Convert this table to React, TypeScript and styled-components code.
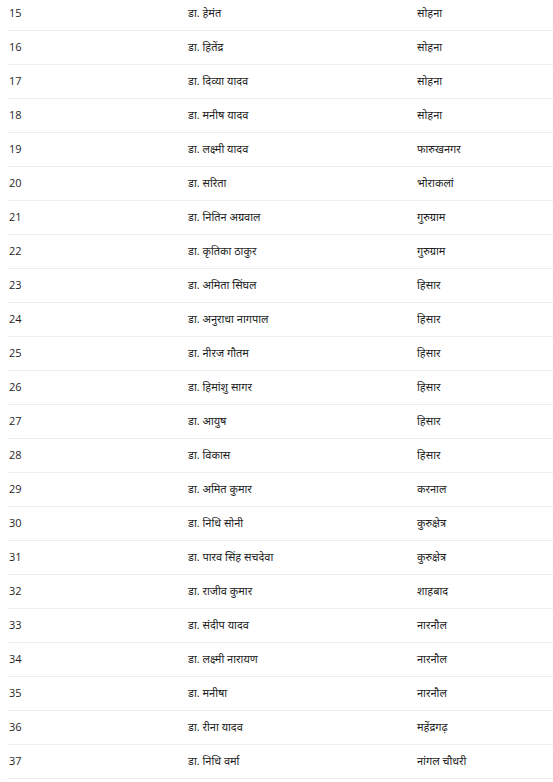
import React from "react";
import styled, { createGlobalStyle } from "styled-components";

const GlobalStyle = createGlobalStyle`
  body {
    margin: 0;
    background: #ffffff;
    font-family: "Open Sans", "Noto Sans", "Noto Sans Devanagari", sans-serif;
    color: #1f1f1f;
  }
`;

const Wrapper = styled.div`
  padding: 0 0 0 8px;
  margin-top: -4px;
  overflow: hidden;
`;

const Table = styled.table`
  width: 100%;
  border-collapse: collapse;
  font-size: 11px;
  line-height: 1.5;
`;

const Row = styled.tr`
  height: 34px;
  border-bottom: 1px solid #ececec;
`;

type CellProps = {
  $width?: number,
};

const Cell = styled.td<CellProps>`
  padding: 0 0 0 1px;
  width: ${props => (props.$width ? `${props.$width}px` : "auto")};
  vertical-align: middle;
  white-space: nowrap;
`;

const doctors: [number, string, string][] = [
  [15, "डा. हेमंत", "सोहना"],
  [16, "डा. हितेंद्र", "सोहना"],
  [17, "डा. दिव्या यादव", "सोहना"],
  [18, "डा. मनीष यादव", "सोहना"],
  [19, "डा. लक्ष्मी यादव", "फारुखनगर"],
  [20, "डा. सरिता", "भोराकलां"],
  [21, "डा. नितिन अग्रवाल", "गुरुग्राम"],
  [22, "डा. कृतिका ठाकुर", "गुरुग्राम"],
  [23, "डा. अमिता सिंघल", "हिसार"],
  [24, "डा. अनुराधा नागपाल", "हिसार"],
  [25, "डा. नीरज गौतम", "हिसार"],
  [26, "डा. हिमांशु सागर", "हिसार"],
  [27, "डा. आयुष", "हिसार"],
  [28, "डा. विकास", "हिसार"],
  [29, "डा. अमित कुमार", "करनाल"],
  [30, "डा. निधि सोनी", "कुरुक्षेत्र"],
  [31, "डा. पारव सिंह सचदेवा", "कुरुक्षेत्र"],
  [32, "डा. राजीव कुमार", "शाहबाद"],
  [33, "डा. संदीप यादव", "नारनौल"],
  [34, "डा. लक्ष्मी नारायण", "नारनौल"],
  [35, "डा. मनीषा", "नारनौल"],
  [36, "डा. रीना यादव", "महेंद्रगढ़"],
  [37, "डा. निधि वर्मा", "नांगल चौधरी"],
];

const App = () => {
  return (
    <Wrapper>
      <GlobalStyle />
      <Table>
        <tbody>
          {doctors.map(([num, name, place]) => (
            <Row key={num}>
              <Cell $width={178}>{num}</Cell>
              <Cell $width={228}>{name}</Cell>
              <Cell>{place}</Cell>
            </Row>
          ))}
        </tbody>
      </Table>
    </Wrapper>
  );
};

export default App;
